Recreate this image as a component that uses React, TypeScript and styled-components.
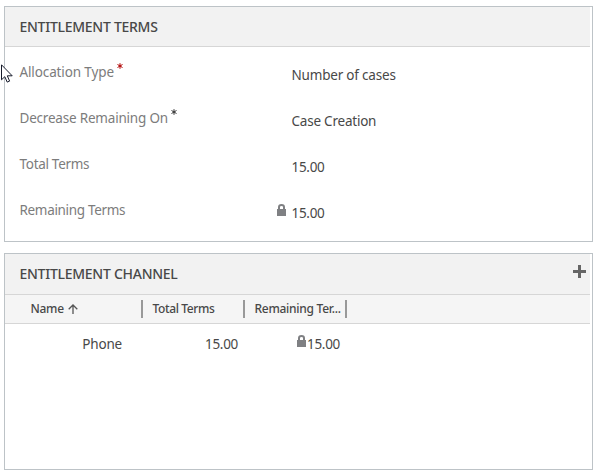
import React from "react";
import styled, { createGlobalStyle } from "styled-components";

const GlobalStyle = createGlobalStyle`
  body {
    margin: 0;
    background: #fff;
    font-family: "Noto Sans", "Open Sans", sans-serif;
    color: #484848;
  }
`;

const Page = styled.main`
  position: relative;
  box-sizing: border-box;
  width: 600px;
  height: 476px;
  padding: 6px 7px 6px 4px;
  display: flex;
  flex-direction: column;
  gap: 11px;
  overflow: hidden;
`;

const Panel = styled.section<{ $height: number }>`
  box-sizing: border-box;
  flex: none;
  height: ${(p) => p.$height}px;
  border: 1px solid #bdc3c7;
  padding-right: 2px;
`;

const PanelHeader = styled.header<{ $height: number }>`
  box-sizing: border-box;
  height: ${(p) => p.$height}px;
  padding: 10px 4px 0 14.5px;
  display: flex;
  align-items: flex-start;
  justify-content: space-between;
  background: #f2f2f2;
  border-bottom: 1px solid #d6d6d6;
`;

const Label = styled.span<{ $spacing?: number }>`
  white-space: nowrap;
  letter-spacing: ${(p) => p.$spacing ?? 0}px;
`;

const Title = styled.h2<{ $spacing: number }>`
  margin: 0;
  font-size: 14px;
  font-weight: 500;
  line-height: 19px;
  white-space: nowrap;
  letter-spacing: ${(p) => p.$spacing}px;
`;

const Fields = styled.div`
  padding-top: 3px;
`;

const Field = styled.div`
  display: grid;
  grid-template-columns: 255.5px 1fr;
  height: 46px;
  padding-left: 14.5px;
  font-size: 13.5px;
  line-height: 20px;
`;

const FieldName = styled.div`
  display: flex;
  padding-top: 12px;
  color: #7c7c7c;
`;

const FieldValue = styled.div`
  display: grid;
  grid-template-columns: 16.5px 1fr;
  padding-top: 15px;
`;

const Required = styled.svg<{ $color: string }>`
  width: 6px;
  height: 6px;
  margin: 1px 0 0 3px;
  color: ${(p) => p.$color};
`;

const LockShape = styled.svg`
  display: block;
  width: 9px;
  height: 12px;
  fill: none;
  color: #7f8083;
`;

const FieldLock = styled.div`
  padding: 1px 0 0 2px;
`;

const AddButton = styled.button`
  display: block;
  width: 13px;
  height: 13px;
  margin: 1px 0 0;
  padding: 0;
  border: 0;
  background: none;
  color: #666;
`;

const PlusShape = styled.svg`
  display: block;
  width: 13px;
  height: 13px;
`;

const ColumnRow = styled.div`
  box-sizing: border-box;
  height: 29px;
  display: grid;
  grid-template-columns: 138px 102px 102px;
  align-items: center;
  background: #f5f5f5;
  border-bottom: 1px solid #d6d6d6;
  font-size: 12px;
  font-weight: 500;
  line-height: 18px;
`;

const Column = styled.div<{ $inset: number }>`
  box-sizing: border-box;
  height: 18px;
  display: flex;
  align-items: center;
  padding-left: ${(p) => p.$inset}px;
  border-right: 2px solid #999;
`;

const SortArrow = styled.svg`
  width: 10px;
  height: 10px;
  margin-left: 4px;
`;

const DataRow = styled.div`
  display: grid;
  grid-template-columns: 117px 116px 102px;
  height: 40px;
  align-items: center;
  font-size: 13.5px;
  line-height: 20px;
`;

const Cell = styled.div`
  display: flex;
  justify-content: flex-end;
`;

const CellLock = styled.div`
  padding-top: 1px;
  margin-right: 1px;
`;

const Pointer = styled.svg`
  position: absolute;
  left: 1px;
  top: 64px;
  width: 12px;
  height: 19px;
`;

const Lock = () => (
  <LockShape viewBox="0 0 9 12">
    <path d="M0 5h9v7H0z" fill="currentColor" />
    <path d="M2 5V3Q2 1 4.5 1T7 3V5" stroke="currentColor" strokeWidth="2" />
  </LockShape>
);

const Star = ({ color }: { color: string }) => (
  <Required $color={color} viewBox="0 0 6 6">
    <path d="M3 .2v5.6M.5 1.5l5 3M5.5 1.5l-5 3" stroke="currentColor" strokeWidth="1" />
  </Required>
);

interface FieldData {
  name: string;
  value: string;
  nameSpacing: number;
  valueSpacing: number;
  star?: string;
  locked?: boolean;
}

const fields: FieldData[] = [
  { name: "Allocation Type", value: "Number of cases", nameSpacing: -0.12, valueSpacing: -0.2, star: "#b00000" },
  { name: "Decrease Remaining On", value: "Case Creation", nameSpacing: -0.2, valueSpacing: -0.22, star: "#333" },
  { name: "Total Terms", value: "15.00", nameSpacing: -0.3, valueSpacing: -0.3 },
  { name: "Remaining Terms", value: "15.00", nameSpacing: -0.32, valueSpacing: -0.3, locked: true },
];

export default function App() {
  return (
    <Page>
      <GlobalStyle />
      <Panel $height={236}>
        <PanelHeader $height={40}>
          <Title $spacing={-0.27}>ENTITLEMENT TERMS</Title>
        </PanelHeader>
        <Fields>
          {fields.map((f) => (
            <Field key={f.name}>
              <FieldName>
                <Label $spacing={f.nameSpacing}>{f.name}</Label>
                {f.star && <Star color={f.star} />}
              </FieldName>
              <FieldValue>
                <FieldLock>{f.locked && <Lock />}</FieldLock>
                <Label $spacing={f.valueSpacing}>{f.value}</Label>
              </FieldValue>
            </Field>
          ))}
        </Fields>
      </Panel>
      <Panel $height={217}>
        <PanelHeader $height={41}>
          <Title $spacing={-0.27}>ENTITLEMENT CHANNEL</Title>
          <AddButton aria-label="Add">
            <PlusShape viewBox="0 0 13 13">
              <path d="M5 0h3v5h5v3H8v5H5V8H0V5h5z" fill="currentColor" />
            </PlusShape>
          </AddButton>
        </PanelHeader>
        <ColumnRow>
          <Column $inset={25.5}>
            <Label $spacing={-0.3}>Name</Label>
            <SortArrow viewBox="0 0 10 10">
              <path d="M5 10V1M.7 5.3 5 1l4.3 4.3" fill="none" stroke="#555" strokeWidth="1.3" />
            </SortArrow>
          </Column>
          <Column $inset={9.5}>
            <Label $spacing={-0.38}>Total Terms</Label>
          </Column>
          <Column $inset={9.5}>
            <Label $spacing={-0.27}>Remaining Ter...</Label>
          </Column>
        </ColumnRow>
        <DataRow>
          <Cell><Label $spacing={-0.2}>Phone</Label></Cell>
          <Cell><Label $spacing={-0.3}>15.00</Label></Cell>
          <Cell>
            <CellLock><Lock /></CellLock>
            <Label $spacing={-0.3}>15.00</Label>
          </Cell>
        </DataRow>
      </Panel>
      <Pointer viewBox="0 0 12 19">
        <path d="M.5.8v15l3.3-3.1 2.4 5.4 2.4-1-2.3-5.3h4.9z" fill="#fff" stroke="#171b2b" strokeWidth="1" />
      </Pointer>
    </Page>
  );
}
